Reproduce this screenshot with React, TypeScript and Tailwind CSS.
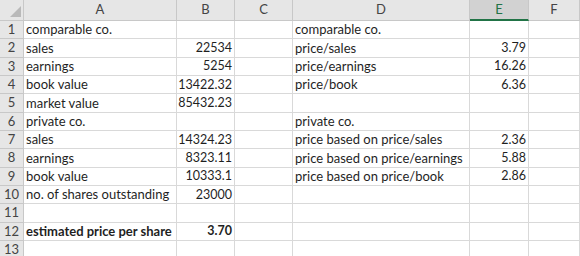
const cols = ["A", "B", "C", "D", "E", "F"];

type Row = [string, string, string, string, string, string];

const rows: Row[] = [
  ["comparable co.", "", "", "comparable co.", "", ""],
  ["sales", "22534", "", "price/sales", "3.79", ""],
  ["earnings", "5254", "", "price/earnings", "16.26", ""],
  ["book value", "13422.32", "", "price/book", "6.36", ""],
  ["market value", "85432.23", "", "", "", ""],
  ["private co.", "", "", "private co.", "", ""],
  ["sales", "14324.23", "", "price based on price/sales", "2.36", ""],
  ["earnings", "8323.11", "", "price based on price/earnings", "5.88", ""],
  ["book value", "10333.1", "", "price based on price/book", "2.86", ""],
  ["no. of shares outstanding", "23000", "", "", "", ""],
  ["", "", "", "", "", ""],
  ["estimated price per share", "3.70", "", "", "", ""],
  ["", "", "", "", "", ""],
];

const numericCols = [1, 4];

export default function App() {
  return (
    <div
      className="w-[580px] h-[256px] overflow-hidden bg-white text-[#1f1f1f]"
      style={{ fontFamily: "Lato, 'Liberation Sans', sans-serif" }}
    >
      <div className="grid grid-cols-[24px_153px_58px_58px_177px_59px_1fr] grid-rows-[21px_repeat(13,18.33px)]">
        {/* corner */}
        <div className="relative bg-[#e6e6e6] border-r border-b border-[#c8c8c8]">
          <div className="absolute left-[10px] top-[6px] w-0 h-0 border-l-[11px] border-l-transparent border-b-[11px] border-b-[#b9b9b9]" />
        </div>
        {cols.map((c) => (
          <div
            key={c}
            className={
              c === "E"
                ? "flex items-center justify-center bg-[#d2d2d2] border-r border-[#c8c8c8] border-b-2 border-b-[#217346] text-[13px] text-[#217346]"
                : "flex items-center justify-center bg-[#e6e6e6] border-r border-b border-[#c8c8c8] text-[13px] text-[#444]"
            }
          >
            {c}
          </div>
        ))}

        {rows.map((r, i) => (
          <>
            <div
              key={`h${i}`}
              className="flex items-center justify-center bg-[#e6e6e6] border-r border-b border-[#c8c8c8] text-[13px] text-[#444]"
            >
              {i + 1}
            </div>
            {r.map((v, j) => (
              <div
                key={`${i}-${j}`}
                className={[
                  "flex items-end pb-[2px] px-[2px] border-r border-b border-[#d9d9d9] leading-none whitespace-nowrap",
                  numericCols.includes(j) ? "justify-end text-[12.5px]" : "justify-start text-[13px]",
                  i === 11 ? "font-bold" : "",
                ].join(" ")}
              >
                {v}
              </div>
            ))}
          </>
        ))}
      </div>
    </div>
  );
}
